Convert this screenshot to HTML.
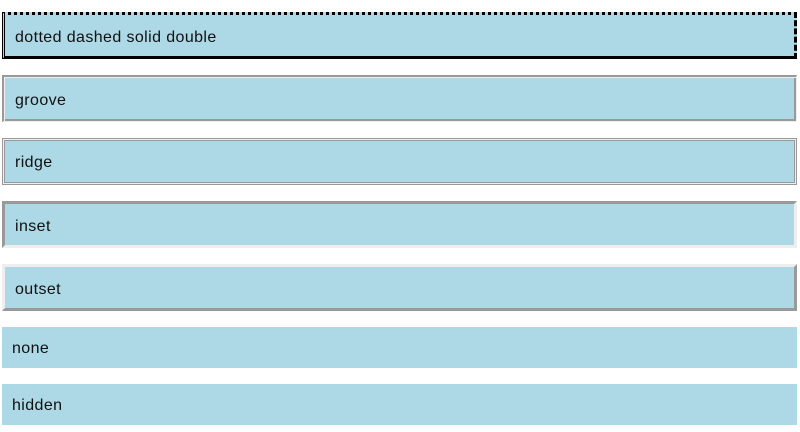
<!DOCTYPE html>
<html><head><style>
html,body{margin:0;padding:0;background:#fff;}
body{width:800px;height:432px;overflow:hidden;position:relative;font-family:"Liberation Sans","Noto Sans CJK KR",sans-serif;font-size:16px;color:#111;letter-spacing:0.4px;}
.b{position:absolute;left:2px;width:795px;box-sizing:border-box;background:#add8e6;padding:0 10px;line-height:43px;}
.k{height:47px;border:3px solid #999;line-height:45px;}
.p{height:41px;}
.d{top:12px;border-top:3px dotted #000;border-right:3px dashed #000;border-bottom:3px solid #000;border-left:3px double #000;}
.g{top:75px;border-width:2px 1px 1px 2px;border-color:#999 #eee #eee #999;padding-left:11px;box-shadow:inset 1px 1px #eee,inset -2px -2px #999;line-height:47px;}
.r{top:138px;border-width:1px;border-color:#999;padding-left:12px;box-shadow:inset 1px 1px #eee,inset -1px -1px #eee,inset 2px 2px #999,inset -2px -2px #999;line-height:47px;}
.i{top:201px;border-color:#999 #eee #eee #999;}
.o{top:264px;border-color:#eee #999 #999 #eee;}
</style></head><body>
<div class="b k d">dotted dashed solid double</div>
<div class="b k g">groove</div>
<div class="b k r">ridge</div>
<div class="b k i">inset</div>
<div class="b k o">outset</div>
<div class="b p" style="top:327px">none</div>
<div class="b p" style="top:384px">hidden</div>
</body></html>
